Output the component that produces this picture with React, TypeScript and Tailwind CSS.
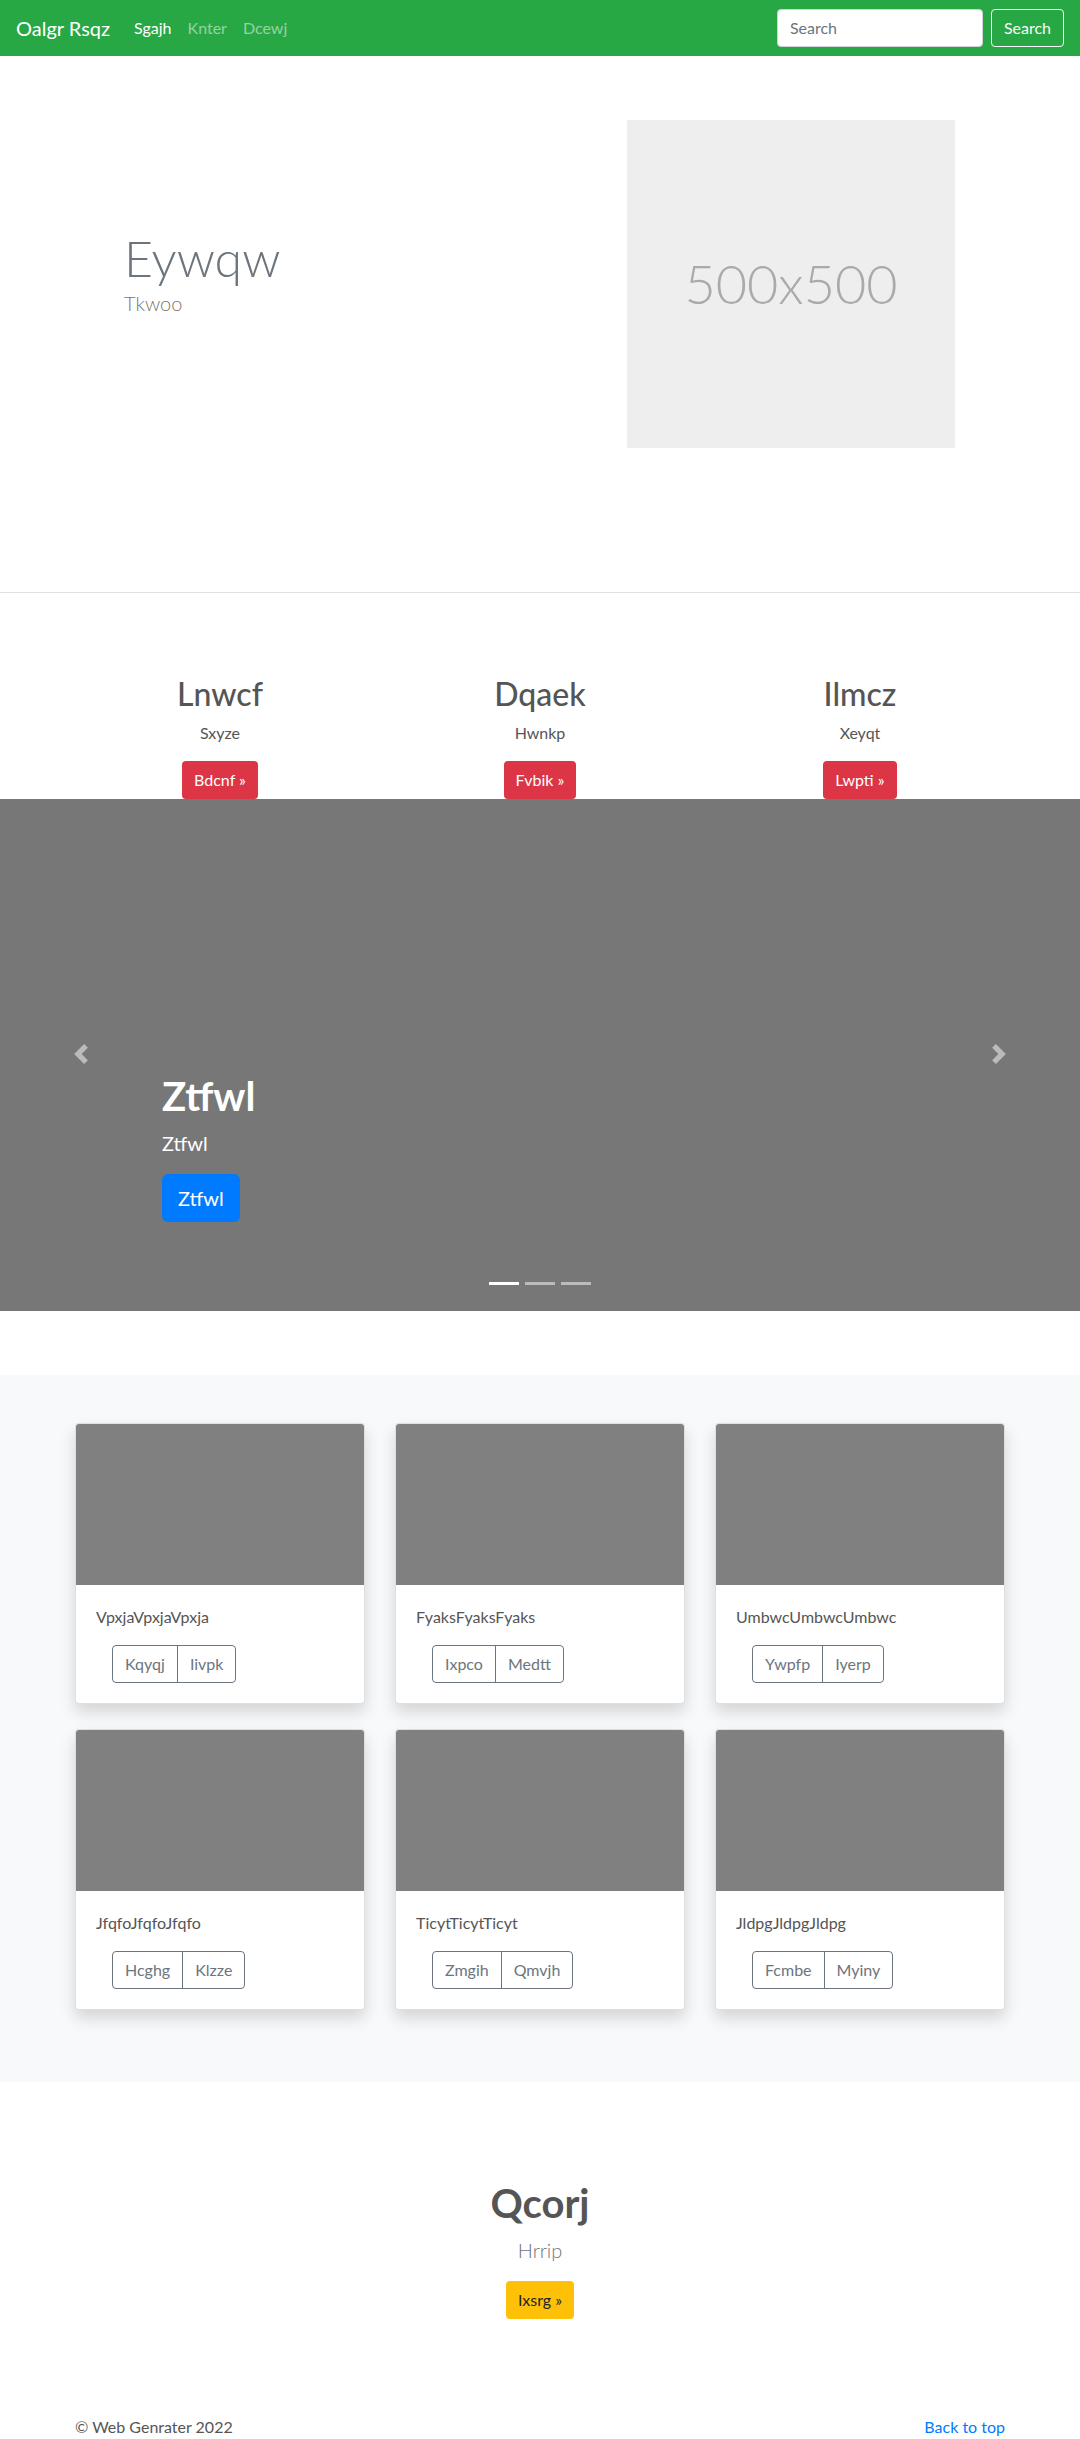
import React from "react";

const font = { fontFamily: 'Lato, "Open Sans", sans-serif' };

function Chevron({ dir }: { dir: "left" | "right" }) {
  return (
    <svg width="20" height="20" viewBox="0 0 8 8" fill="#fff">
      {dir === "left" ? (
        <path d="M5.25 0l-4 4 4 4 1.5-1.5L4.25 4l2.5-2.5L5.25 0z" />
      ) : (
        <path d="M2.75 0l-1.5 1.5L3.75 4l-2.5 2.5L2.75 8l4-4-4-4z" />
      )}
    </svg>
  );
}

const features = [
  { t: "Lnwcf", s: "Sxyze", b: "Bdcnf »" },
  { t: "Dqaek", s: "Hwnkp", b: "Fvbik »" },
  { t: "Ilmcz", s: "Xeyqt", b: "Lwpti »" },
];

const cards = [
  { t: "VpxjaVpxjaVpxja", a: "Kqyqj", b: "Iivpk" },
  { t: "FyaksFyaksFyaks", a: "Ixpco", b: "Medtt" },
  { t: "UmbwcUmbwcUmbwc", a: "Ywpfp", b: "Iyerp" },
  { t: "JfqfoJfqfoJfqfo", a: "Hcghg", b: "Klzze" },
  { t: "TicytTicytTicyt", a: "Zmgih", b: "Qmvjh" },
  { t: "JldpgJldpgJldpg", a: "Fcmbe", b: "Myiny" },
];

export default function App() {
  return (
    <div style={font} className="bg-white text-[#555] text-[16px] leading-[24px]">
      {/* Navbar */}
      <nav className="h-14 bg-[#28a745] px-4 flex items-center">
        <span className="text-[20px] leading-[30px] text-white mr-4">Oalgr Rsqz</span>
        <span className="px-2 text-white">Sgajh</span>
        <span className="px-2 text-white/50">Knter</span>
        <span className="px-2 text-white/50">Dcewj</span>
        <div className="ml-auto flex items-center gap-2">
          <div className="w-[206px] h-[38px] rounded bg-white border border-[#ced4da] px-3 flex items-center text-[#6c757d]">
            Search
          </div>
          <div className="h-[38px] rounded border border-[#f8f9fa] px-3 flex items-center text-[#f8f9fa]">
            Search
          </div>
        </div>
      </nav>

      {/* Hero */}
      <section className="border-b border-[#dee2e6] pt-16 pb-[144px]">
        <div className="w-[960px] mx-auto flex items-start">
          <div className="w-[480px] pl-16 pt-[108px]">
            <h1 className="text-[50px] leading-[1.2] font-light text-[#6c757d]">Eywqw</h1>
            <p className="text-[20px] leading-[30px] font-light text-[#7d7566]">Tkwoo</p>
          </div>
          <div className="pl-[87px]">
            <div className="w-[328px] h-[328px] bg-[#eeeeee] flex items-center justify-center">
              <span className="text-[54px] text-[#aaaaaa] font-light">500x500</span>
            </div>
          </div>
        </div>
      </section>

      {/* Features */}
      <section className="pt-[82px]">
        <div className="w-[960px] mx-auto grid grid-cols-3">
          {features.map((f) => (
            <div key={f.t} className="flex flex-col items-center">
              <h2 className="text-[32px] leading-[1.2] font-medium text-[#555] mb-2">{f.t}</h2>
              <p className="mb-4 text-[#555]">{f.s}</p>
              <div className="h-[38px] px-3 rounded bg-[#dc3545] text-white flex items-center">{f.b}</div>
            </div>
          ))}
        </div>
      </section>

      {/* Carousel */}
      <section className="relative h-[512px] bg-[#777777] flex flex-col justify-end pl-[162px] pb-[89px]">
        <h1 className="text-[40px] leading-[48px] font-bold text-white mb-2">Ztfwl</h1>
        <p className="text-[20px] leading-[30px] text-white mb-4">Ztfwl</p>
        <div>
          <span className="inline-flex h-12 items-center px-4 rounded-md bg-[#007bff] text-white text-[20px]">Ztfwl</span>
        </div>
        <div className="absolute left-[71px] top-[245px] opacity-50">
          <Chevron dir="left" />
        </div>
        <div className="absolute right-[71px] top-[245px] opacity-50">
          <Chevron dir="right" />
        </div>
        <div className="absolute bottom-[26px] left-0 right-0 flex justify-center gap-[6px]">
          <span className="w-[30px] h-[3px] bg-white" />
          <span className="w-[30px] h-[3px] bg-white/50" />
          <span className="w-[30px] h-[3px] bg-white/50" />
        </div>
      </section>

      {/* Cards */}
      <section className="mt-16 bg-[#f8f9fa] pt-12 pb-[72px]">
        <div className="w-[930px] mx-auto grid grid-cols-3 gap-x-[30px] gap-y-[25px]">
          {cards.map((c) => (
            <div
              key={c.t}
              className="bg-white border border-black/[0.125] rounded overflow-hidden shadow-[0_8px_16px_rgba(0,0,0,0.15)]"
            >
              <div className="h-[161px] bg-[#808080]" />
              <div className="p-5">
                <p className="mb-4 text-[#555]">{c.t}</p>
                <div className="ml-4 inline-flex h-[38px] border border-[#6c757d] rounded text-[#6c757d]">
                  <span className="px-3 flex items-center">{c.a}</span>
                  <span className="px-3 flex items-center border-l border-[#6c757d]">{c.b}</span>
                </div>
              </div>
            </div>
          ))}
        </div>
      </section>

      {/* Qcorj */}
      <section className="pt-[97px] flex flex-col items-center">
        <h1 className="text-[40px] leading-[48px] font-bold text-[#555] mb-2">Qcorj</h1>
        <p className="text-[20px] leading-[30px] font-light text-[#6c757d] mb-4">Hrrip</p>
        <div className="h-[38px] px-3 rounded bg-[#ffc107] text-[#212529] flex items-center">Ixsrg »</div>
      </section>

      {/* Footer */}
      <footer className="pt-[96px] pb-12">
        <div className="w-[930px] mx-auto flex justify-between">
          <p className="text-[#555]">© Web Genrater 2022</p>
          <p className="text-[#007bff]">Back to top</p>
        </div>
      </footer>
    </div>
  );
}
